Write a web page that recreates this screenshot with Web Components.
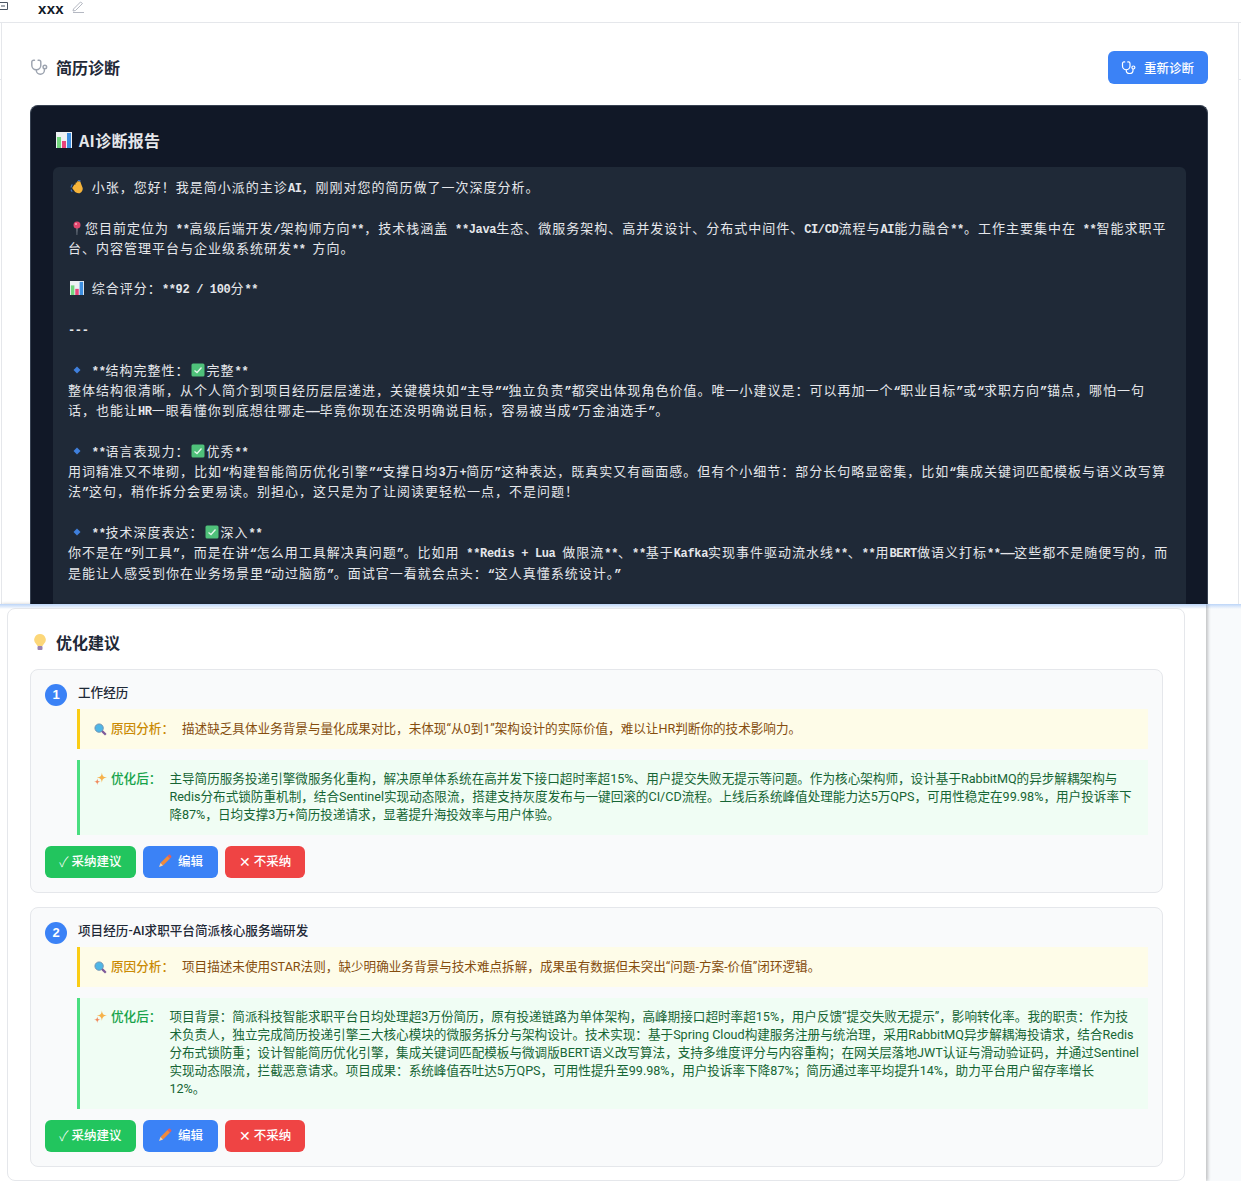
<!DOCTYPE html>
<html lang="zh">
<head>
<meta charset="utf-8">
<style>
  html, body { margin: 0; padding: 0; height: 1181px; overflow: hidden; background: #fff; }
  body { font-family: Roboto, "Noto Sans CJK SC", sans-serif; background: linear-gradient(#e5e7eb, #e5e7eb) no-repeat 0 79px / 100% 1px; }
</style>
</head>
<body>
<top-bar></top-bar>
<diagnosis-panel>
  <diagnosis-report>
<report-line><e-moji name="wave"></e-moji> 小张，您好！我是简小派的主诊AI，刚刚对您的简历做了一次深度分析。</report-line>
<report-line></report-line>
<report-line><e-moji name="pin"></e-moji>您目前定位为 **高级后端开发/架构师方向**，技术栈涵盖 **Java生态、微服务架构、高并发设计、分布式中间件、CI/CD流程与AI能力融合**。工作主要集中在 **智能求职平台、内容管理平台与企业级系统研发** 方向。</report-line>
<report-line></report-line>
<report-line><e-moji name="chart"></e-moji> 综合评分：**92 / 100分**</report-line>
<report-line></report-line>
<report-line>---</report-line>
<report-line></report-line>
<report-line><e-moji name="diamond"></e-moji> **结构完整性：<e-moji name="check"></e-moji>完整**</report-line>
<report-line>整体结构很清晰，从个人简介到项目经历层层递进，关键模块如“主导”“独立负责”都突出体现角色价值。唯一小建议是：可以再加一个“职业目标”或“求职方向”锚点，哪怕一句话，也能让HR一眼看懂你到底想往哪走——毕竟你现在还没明确说目标，容易被当成“万金油选手”。</report-line>
<report-line></report-line>
<report-line><e-moji name="diamond"></e-moji> **语言表现力：<e-moji name="check"></e-moji>优秀**</report-line>
<report-line>用词精准又不堆砌，比如“构建智能简历优化引擎”“支撑日均3万+简历”这种表达，既真实又有画面感。但有个小细节：部分长句略显密集，比如“集成关键词匹配模板与语义改写算法”这句，稍作拆分会更易读。别担心，这只是为了让阅读更轻松一点，不是问题！</report-line>
<report-line></report-line>
<report-line><e-moji name="diamond"></e-moji> **技术深度表达：<e-moji name="check"></e-moji>深入**</report-line>
<report-line>你不是在“列工具”，而是在讲“怎么用工具解决真问题”。比如用 **Redis + Lua 做限流**、**基于Kafka实现事件驱动流水线**、**用BERT做语义打标**——这些都不是随便写的，而是能让人感受到你在业务场景里“动过脑筋”。面试官一看就会点头：“这人真懂系统设计。”</report-line>
  </diagnosis-report>
</diagnosis-panel>
<suggestion-panel>
  <suggestion-card index="1" title="工作经历" cause="描述缺乏具体业务背景与量化成果对比，未体现“从0到1”架构设计的实际价值，难以让HR判断你的技术影响力。">主导简历服务投递引擎微服务化重构，解决原单体系统在高并发下接口超时率超15%、用户提交失败无提示等问题。作为核心架构师，设计基于RabbitMQ的异步解耦架构与Redis分布式锁防重机制，结合Sentinel实现动态限流，搭建支持灰度发布与一键回滚的CI/CD流程。上线后系统峰值处理能力达5万QPS，可用性稳定在99.98%，用户投诉率下降87%，日均支撑3万+简历投递请求，显著提升海投效率与用户体验。</suggestion-card>
  <suggestion-card index="2" title="项目经历-AI求职平台简派核心服务端研发" cause="项目描述未使用STAR法则，缺少明确业务背景与技术难点拆解，成果虽有数据但未突出“问题-方案-价值”闭环逻辑。">项目背景：简派科技智能求职平台日均处理超3万份简历，原有投递链路为单体架构，高峰期接口超时率超15%，用户反馈“提交失败无提示”，影响转化率。我的职责：作为技术负责人，独立完成简历投递引擎三大核心模块的微服务拆分与架构设计。技术实现：基于Spring Cloud构建服务注册与统治理，采用RabbitMQ异步解耦海投请求，结合Redis分布式锁防重；设计智能简历优化引擎，集成关键词匹配模板与微调版BERT语义改写算法，支持多维度评分与内容重构；在网关层落地JWT认证与滑动验证码，并通过Sentinel实现动态限流，拦截恶意请求。项目成果：系统峰值吞吐达5万QPS，可用性提升至99.98%，用户投诉率下降87%；简历通过率平均提升14%，助力平台用户留存率增长<br>12%。</suggestion-card>
</suggestion-panel>
<script>
const SCOPE = '<path d="M5 2.500H4A2 2 0 0 0 2 4.500V8a5 5 0 0 0 10 0V4.500a2 2 0 0 0-2-2H9"/><path d="M7 13v.500a4.500 4.500 0 0 0 9 0V12"/><circle cx="16.500" cy="10" r="2"/>';
const EMOJI = {
  wave: '<svg viewBox="0 0 16 16" width="15" height="15"><path d="M2.500 9 5 5l1 .5.800-3L8 3l.5-2 1.500.6.500-.6 1.500 1 .3 1.500L14.500 9c.3 3-1.500 6-4.500 6-2.500 0-4-1-5-2.500L2.500 9z" fill="#f5b33a"/><path d="M1 8.500 2.500 5M1 11l1.500 2.500M9 .5l3 .5" stroke="#3f74c4" stroke-width="1.200" fill="none"/></svg>',
  pin: '<svg viewBox="0 0 14 14" width="14" height="14"><path d="M6.500 7h1L7.200 14h-.5z" fill="#9aa3ad"/><circle cx="7" cy="4" r="3.500" fill="#e0466d"/><circle cx="6" cy="3" r="1" fill="#f7a8bd"/></svg>',
  chart: '<svg viewBox="0 0 16 16" width="16" height="16"><rect width="16" height="16" fill="#eef1f4"/><rect x="1" y="5" width="4" height="11" fill="#72d67e"/><rect x="6" y="9" width="4" height="7" fill="#e8457c"/><rect x="11" y="1" width="4" height="15" fill="#3e8fe0"/></svg>',
  diamond: '<svg viewBox="0 0 14 14" width="14" height="14"><path d="M7 3.500 10.500 7 7 10.500 3.500 7z" fill="#3f7fdc"/></svg>',
  check: '<svg viewBox="0 0 14 14" width="14" height="14"><rect x=".5" y=".5" width="13" height="13" rx="1.500" fill="#4fc17a"/><path d="M3.500 7.500 6 9.500l4.500-5" stroke="#e6f7ec" stroke-width="1.300" fill="none"/></svg>',
  bulb: '<svg viewBox="0 0 12 16" width="12" height="16"><path d="M6 0a5.800 5.800 0 0 0-3.500 10.400c.7.700 1 1.100 1 1.600h5c0-.5.300-.9 1-1.600A5.800 5.800 0 0 0 6 0z" fill="#fcd779"/><rect x="3.500" y="12" width="5" height="4" rx="1" fill="#9a83b0"/></svg>',
  lens: '<svg viewBox="0 0 14 14" width="13" height="13"><path d="m8.500 8.500 4.200 4.200" stroke="#7d5a9a" stroke-width="2.400"/><circle cx="5.500" cy="5.500" r="4.500" fill="#4fb6e6" stroke="#6b8fb0"/></svg>',
  spark: '<svg viewBox="0 0 14 14" width="13" height="14"><path d="M8.500 0C9 3.800 10 4.800 14 5.500 10 6.200 9 7.200 8.500 11 8 7.200 7 6.200 3 5.500 7 4.800 8 3.800 8.500 0z" fill="#f6b24a"/><path d="M3.500 6.500C3.800 9 4.500 9.700 7 10 4.500 10.300 3.800 11 3.500 13.500 3.200 11 2.500 10.300 0 10 2.500 9.700 3.200 9 3.500 6.500z" fill="#f08a5d"/></svg>',
  pencil: '<svg viewBox="0 0 14 14" width="14" height="14"><path d="M9.500 2 12 4.500 5 11.500 2.500 9z" fill="#f08a3c"/><path d="m9.500 2 1.200-1.200a1 1 0 0 1 1.300 0L13.200 2a1 1 0 0 1 0 1.300L12 4.500z" fill="#e4605a"/><path d="M2.500 9 1 13l4-1.500z" fill="#f5d3a8"/></svg>'
};

class EMoji extends HTMLElement {
  connectedCallback() {
    const markup = EMOJI[this.getAttribute("name")];
    const [, w, h] = markup.match(/width="(\d+)" height="(\d+)"/);
    this.attachShadow({ mode: "open" }).innerHTML = `<style>
      :host { display: inline-block; width: var(--emoji-width, auto); text-align: center; line-height: 0; vertical-align: -2px; }
      svg { width: var(--emoji-size, ${w}px); height: var(--emoji-size, ${h}px); }
    </style>${markup}`;
  }
}
customElements.define("e-moji", EMoji);

class TopBar extends HTMLElement {
  constructor() {
    super();
    this.attachShadow({ mode: "open" }).innerHTML = `
      <style>
        :host { display: flex; align-items: flex-start; height: 22px; border-bottom: 1px solid #e5e7eb; }
        .back { margin: 2px 30px 0 0; flex: none; }
        .name { font: 700 15px/18px "Liberation Sans", sans-serif; color: #111827; letter-spacing: .3px; }
        .pen { margin: 1px 0 0 8px; }
      </style>
      <svg class="back" width="8" height="8" viewBox="0 0 8 8" fill="none" stroke="#4b5563"><path d="M0 .5h7.500v7H0M1 4h4"/></svg>
      <span class="name">xxx</span>
      <svg class="pen" width="13" height="12" viewBox="0 0 13 12" fill="none" stroke="#b4b8c2"><path d="M1.500 8 8.500 1l2 1.500-7 7-2.500.500z"/><path d="M1 11.500h11"/></svg>`;
  }
}
customElements.define("top-bar", TopBar);

class DiagnosisPanel extends HTMLElement {
  constructor() {
    super();
    this.attachShadow({ mode: "open" }).innerHTML = `
      <style>
        :host { display: block; height: 581px; overflow: hidden; margin: 0 2px 0 1px; border: solid #e5e7eb; border-width: 0 1px; padding: 0 30px 0 28px; box-sizing: border-box; background: #fff; }
        header { display: flex; align-items: center; justify-content: space-between; height: 33px; margin: 28px 0 21px; }
        h2 { display: flex; align-items: center; gap: 8px; margin: -1px 0 0; font: 700 16px "Noto Sans CJK SC", sans-serif; color: #1f2937; }
        button { display: flex; align-items: center; gap: 8px; width: 100px; height: 33px; padding: 0 0 0 13px; background: #3b82f6; color: #fff; border: 0; border-radius: 6px; font: 500 12.500px "Noto Sans CJK SC", sans-serif; }
        svg { fill: none; stroke-width: 1.600; stroke-linecap: round; stroke-linejoin: round; }
      </style>
      <header>
        <h2><svg width="18" height="18" viewBox="0 0 20 20" stroke="#9ca3af">${SCOPE}</svg>简历诊断</h2>
        <button><svg width="15" height="15" viewBox="0 0 20 20" stroke="#fff">${SCOPE}</svg>重新诊断</button>
      </header>
      <slot></slot>`;
  }
}
customElements.define("diagnosis-panel", DiagnosisPanel);

class DiagnosisReport extends HTMLElement {
  constructor() {
    super();
    this.attachShadow({ mode: "open" }).innerHTML = `
      <style>
        :host { display: block; background: #111827; border: 1px solid #374151; border-bottom: 0; border-radius: 8px 8px 0 0; padding: 23px 21px 0 22px; color: #e5e7eb; }
        h3 { display: flex; align-items: center; gap: 7px; margin: -2px 0 14px 3px; font: 700 16px/26px "Noto Sans CJK SC", sans-serif; letter-spacing: .3px; color: #e5e7eb; }
        .body { background: #1f2937; border-radius: 6px; padding: 10px 16px 10px 15px; min-height: 600px; }
      </style>
      <h3><e-moji name="chart"></e-moji>AI诊断报告</h3>
      <div class="body"><slot></slot></div>`;
  }
}
customElements.define("diagnosis-report", DiagnosisReport);

class ReportLine extends HTMLElement {
  constructor() {
    super();
    this.attachShadow({ mode: "open" }).innerHTML = `
      <style>
        :host { display: block; min-height: 20.300px; --emoji-width: 17px; --emoji-size: 14px; font: 400 13px/20.300px "Noto Sans CJK SC", sans-serif; letter-spacing: 1px; color: #e5e7eb; }
        ::slotted(.latin) { font: 700 12px/1 "Liberation Mono", monospace; letter-spacing: -.35px; white-space: pre-wrap; }
      </style><slot></slot>`;
  }
  connectedCallback() {
    // Latin runs are half a CJK cell wide, so they get their own span
    for (const node of [...this.childNodes]) {
      if (node.nodeType !== Node.TEXT_NODE) continue;
      const frag = document.createDocumentFragment();
      for (const part of node.textContent.split(/([\x20-\x7e“”—]+)/)) {
        if (!part) continue;
        if (/^[\x20-\x7e“”—]/.test(part)) {
          const span = document.createElement("span");
          span.className = "latin";
          span.textContent = part;
          frag.append(span);
        } else {
          frag.append(part);
        }
      }
      node.replaceWith(frag);
    }
  }
}
customElements.define("report-line", ReportLine);

class SuggestionPanel extends HTMLElement {
  constructor() {
    super();
    this.attachShadow({ mode: "open" }).innerHTML = `
      <style>
        :host { display: block; height: 577px; box-sizing: border-box; background: linear-gradient(#bcd5f8, #e3edfb 3px, #f8fafc 5px); }
        .sheet { width: 1206px; height: 100%; box-sizing: border-box; background: linear-gradient(#bcd5f8, #e3edfb 3px, #fff 5px); padding: 4px 21px 0 7px; box-shadow: 2px 0 3px rgba(0,0,0,.22); }
        .card { border: 1px solid #e5e7eb; border-radius: 8px; height: 100%; padding: 0 21px 0 22px; box-sizing: border-box; }
        h2 { display: flex; align-items: center; gap: 10px; margin: 0; height: 60px; font: 700 16px "Noto Sans CJK SC", sans-serif; color: #1f2937; padding: 5px 0 0 4px; box-sizing: border-box; }
        .list { display: flex; flex-direction: column; gap: 14px; }
      </style>
      <div class="sheet"><div class="card">
        <h2><e-moji name="bulb"></e-moji>优化建议</h2>
        <div class="list"><slot></slot></div>
      </div></div>`;
  }
}
customElements.define("suggestion-panel", SuggestionPanel);

class SuggestionCard extends HTMLElement {
  constructor() {
    super();
    this.attachShadow({ mode: "open" }).innerHTML = `
      <style>
        :host { display: block; background: #f9fafb; border: 1px solid #e5e7eb; border-radius: 8px; padding: 14px; font-size: 12.600px; line-height: 18px; }
        .head { display: flex; gap: 11px; }
        .num { width: 22px; height: 22px; border-radius: 50%; background: #3b82f6; color: #fff; font: 700 13px/22px "Liberation Sans", sans-serif; text-align: center; flex: none; }
        .title { font-weight: 500; color: #1f2937; line-height: 18px; }
        .box { margin: 11px 0 11px 32px; padding: 9.500px 9px 11.500px 14px; display: flex; border-left: 3px solid; box-sizing: border-box; }
        .cause { background: #fefce8; border-color: #facc15; color: #854d0e; margin-top: 3px; height: 40px; align-items: center; padding: 0 10px 0 14px; }
        .fix { background: #f0fdf4; border-color: #4ade80; color: #166534; }
        .label { flex: none; font-weight: 500; display: inline-flex; gap: 4px; align-items: center; margin-right: 8px; }
        .cause .label { color: #ca8a04; }
        .fix .label { color: #16a34a; height: 18px; }
        .actions { display: flex; gap: 7px; }
        button { display: flex; align-items: center; justify-content: center; gap: 3px; height: 32px; border: 0; border-radius: 6px; color: #fff; font: 500 12.500px "Noto Sans CJK SC", sans-serif; padding: 0 0 3px; }
        .ok { width: 91px; background: #22c55e; }
        .edit { width: 75px; background: #3b82f6; gap: 6px; }
        .no { width: 80px; background: #ef4444; }
        .mark { font: 300 14px/1 "Noto Sans CJK SC", sans-serif; }
      </style>
      <div class="head"><span class="num">${this.getAttribute("index")}</span><span class="title">${this.getAttribute("title")}</span></div>
      <div class="box cause"><span class="label"><e-moji name="lens"></e-moji>原因分析：</span><span>${this.getAttribute("cause")}</span></div>
      <div class="box fix"><span class="label"><e-moji name="spark"></e-moji>优化后：</span><span><slot></slot></span></div>
      <div class="actions">
        <button class="ok"><span class="mark">✓</span>采纳建议</button>
        <button class="edit"><e-moji name="pencil"></e-moji>编辑</button>
        <button class="no"><span class="mark">✕</span>不采纳</button>
      </div>`;
  }
}
customElements.define("suggestion-card", SuggestionCard);
</script>
</body>
</html>
